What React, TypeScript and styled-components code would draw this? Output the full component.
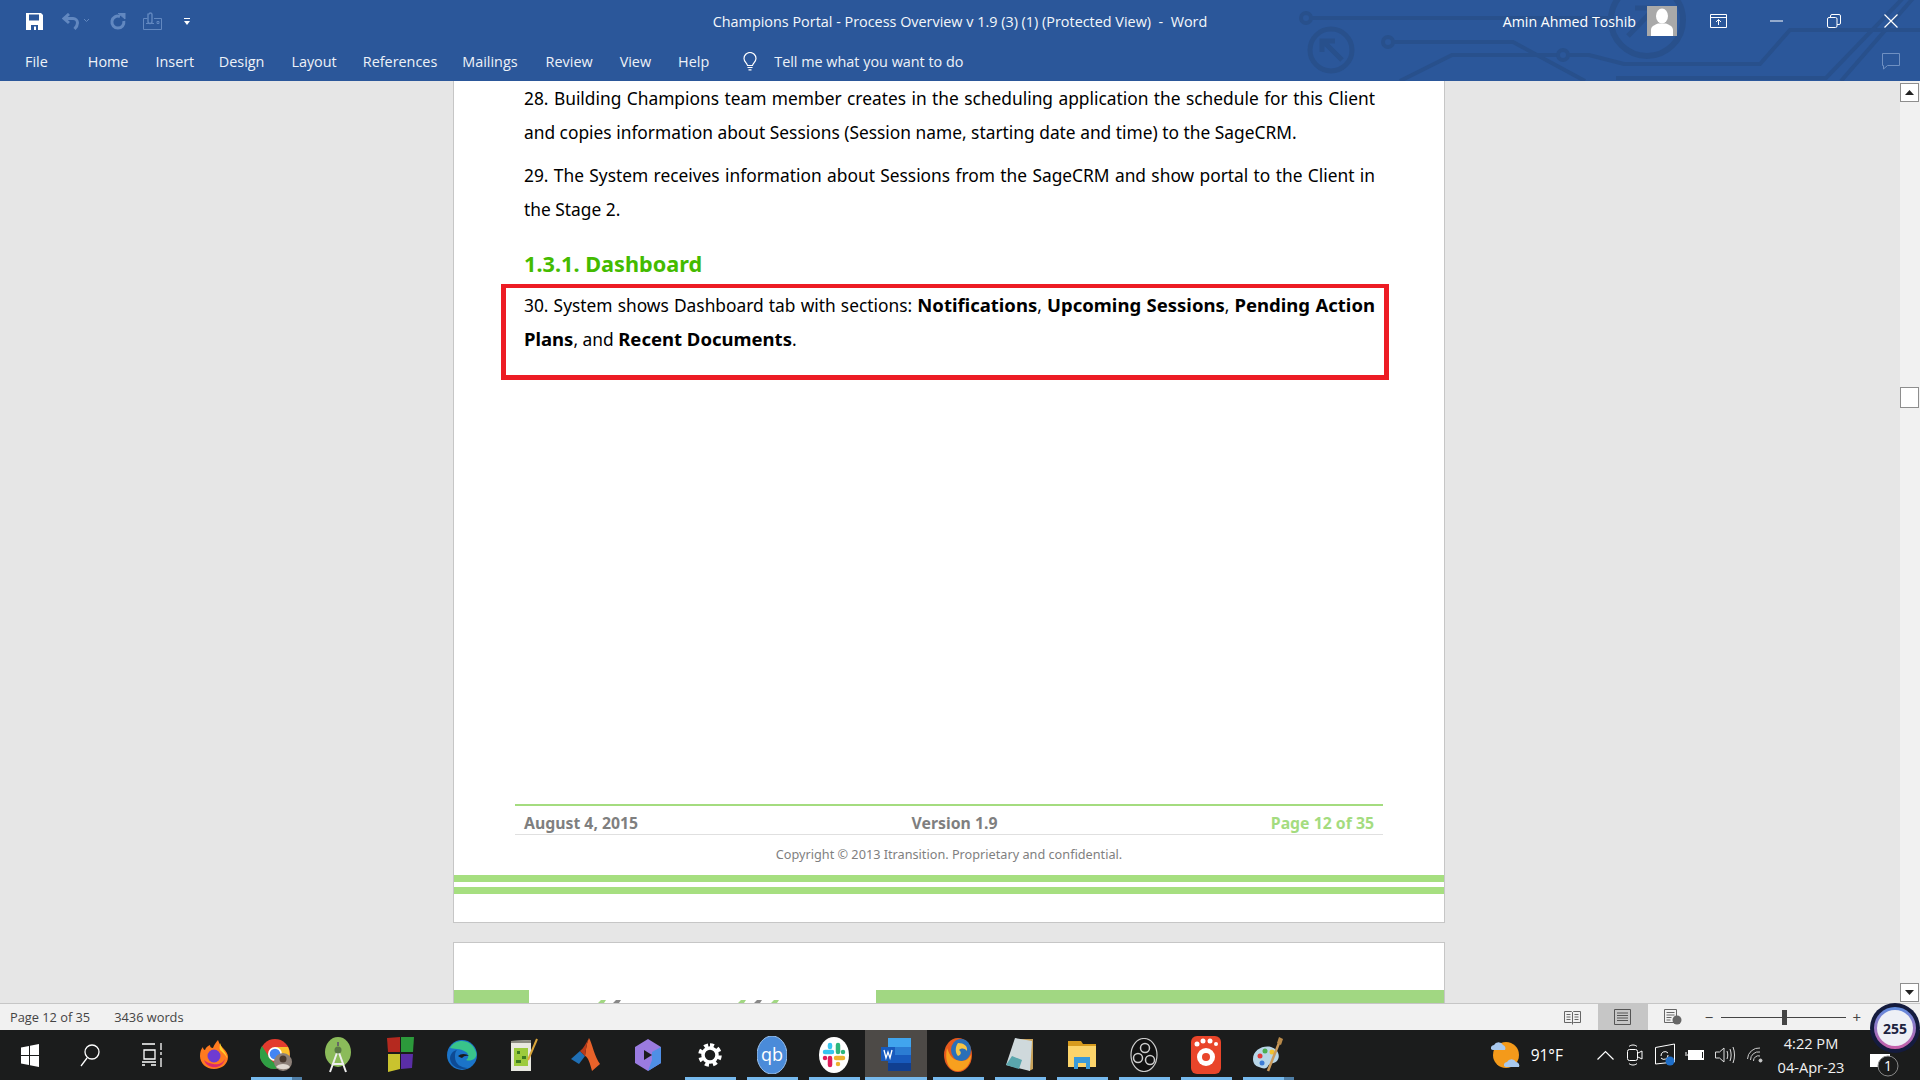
import React from "react";
import styled, { createGlobalStyle } from "styled-components";

const Global = createGlobalStyle`
  html, body { margin: 0; padding: 0; background: #e6e6e6; overflow: hidden; }
  * { box-sizing: border-box; }
`;

const ui = `"Open Sans", "Noto Sans", "Liberation Sans", sans-serif`;
const doc = `"Noto Sans", "Open Sans", "Liberation Sans", sans-serif`;

const Screen = styled.div`
  position: relative; width: 1920px; height: 1080px; display: flex; flex-direction: column; overflow: hidden;
`;

/* ---------- title bar ---------- */
const TitleBar = styled.header`
  position: relative; height: 81px; flex: none; background: #2b579a; color: #fff; font-family: ${ui};
`;
const CircuitArt = styled.svg`
  position: absolute; top: 0; right: 0; pointer-events: none;
`;
const TopRow = styled.div`
  position: relative; height: 42px; display: grid; grid-template-columns: 1fr auto 1fr; align-items: center;
`;
const Qat = styled.div`
  display: flex; align-items: center; padding-left: 26px;
`;
const QatItem = styled.span<{ $w: number }>`
  display: flex; width: ${(p) => p.$w}px; align-items: center;
`;
const DocTitle = styled.div`
  font-size: 14.4px; white-space: pre; color: #f4f7fb;
`;
const Account = styled.div`
  display: flex; align-items: center; justify-content: flex-end;
`;
const UserName = styled.span`
  font-size: 14.2px; margin-right: 11px; white-space: nowrap;
`;
const Avatar = styled.div`
  width: 30px; height: 30px; background: #a9a9a9; margin-right: 13px; display: flex;
`;
const WinBtn = styled.div`
  width: 57.5px; height: 42px; display: flex; align-items: center; justify-content: center;
`;
const TabRow = styled.nav`
  position: relative; height: 39px; display: flex; align-items: center; padding-left: 25px; padding-right: 20px;
`;
const Tab = styled.span<{ $gap: number }>`
  font-size: 14.4px; color: #eef2f8; margin-right: ${(p) => p.$gap}px; white-space: nowrap;
`;
const TellMe = styled.span`
  font-size: 14.4px; color: #eef2f8; margin-left: 17px;
`;
const CommentSlot = styled.div`
  margin-left: auto; display: flex;
`;

/* ---------- document area ---------- */
const Work = styled.main`
  flex: 1; display: flex; min-height: 0; background: #e6e6e6;
`;
const Canvas = styled.div`
  flex: 1; display: flex; flex-direction: column; align-items: center; overflow: hidden; gap: 19px; padding-right: 2px;
`;
const Sheet = styled.section`
  flex: none; width: 992px; height: 842px; background: #fff; border: 1px solid #c6c6c6; border-top: 0;
  display: flex; flex-direction: column; font-family: ${doc}; color: #000;
`;
const Body = styled.div`
  padding: 0 69px 0 70px;
`;
const Para = styled.p`
  margin: 0 0 9px; font-size: 17.35px; line-height: 34px; text-align: justify; text-align-last: left;
`;
const Heading = styled.h3`
  margin: 23px 0 0; font-size: 21.7px; line-height: 30px; font-weight: 700; color: #44bb00;
`;
const Callout = styled.div`
  margin: 5px -14px 0 -23px; height: 96px; border: 5px solid #ed1c24; border-top-width: 4px;
  padding: 0 9px 0 18px;
`;
const CalloutText = styled.p`
  margin: 0; font-size: 17.35px; line-height: 34px; text-align: justify; text-align-last: left;
`;
const Strong = styled.b`
  font-weight: 700; font-size: 18.5px; line-height: 0;
`;
const PageFoot = styled.footer`
  margin-top: auto; display: flex; flex-direction: column;
`;
const FootRow = styled.div`
  margin: 0 61px; height: 31px; border-top: 2px solid #a4dc7f; border-bottom: 1px solid #e0e0e0;
  display: flex; justify-content: space-between; align-items: center; padding: 5px 9px 0;
  font-size: 15.8px; font-weight: 700; color: #7f7f7f;
`;
const PageNo = styled.span`
  color: #a4dc7f;
`;
const Copyright = styled.div`
  text-align: center; height: 40px; line-height: 39px; font-size: 12.7px; color: #7f7f7f;
`;
const GreenBand = styled.div`
  height: 7px; background: #a6df80;
  & + & { margin-top: 5px; }
`;
const FootPad = styled.div`
  height: 28px;
`;
const SheetNext = styled.section`
  flex: none; width: 992px; height: 200px; background: #fff; border: 1px solid #c6c6c6; padding-top: 47px;
`;
const HeaderBand = styled.div`
  display: flex; height: 20px; background: #a1d782;
`;
const LogoGap = styled.div`
  width: 347px; margin-left: 75px; background: #fff; display: flex;
`;

const ScrollBar = styled.aside`
  width: 20px; flex: none; background: #f1f1f1; display: flex; flex-direction: column; padding: 2px 1px 1px 0;
`;
const ScrollBtn = styled.div`
  width: 19px; height: 19px; background: #fff; border: 1px solid #8e8e8e; display: flex; align-items: center; justify-content: center;
`;
const Thumb = styled.div`
  width: 19px; height: 21px; background: #fff; border: 1px solid #8e8e8e; margin-top: 285px;
`;
const ScrollSpace = styled.div`
  flex: 1;
`;

/* ---------- status bar ---------- */
const StatusBar = styled.div`
  height: 27px; flex: none; background: #f1f1f1; border-top: 1px solid #c6c6c6; display: flex; align-items: center;
  font-family: ${ui}; font-size: 12.8px; color: #444; padding-left: 10px;
`;
const StatusText = styled.span`
  margin-right: 24px;
`;
const ViewGroup = styled.div`
  margin-left: auto; display: flex; align-items: center; height: 100%;
`;
const ViewBtn = styled.div<{ $on?: boolean }>`
  width: 50px; height: 100%; display: flex; align-items: center; justify-content: center;
  background: ${(p) => (p.$on ? "#c6c6c6" : "transparent")};
`;
const ZoomBox = styled.div`
  display: flex; align-items: center; margin-left: 7px; margin-right: 59px; color: #444; font-size: 15px;
`;
const ZoomTrack = styled.div`
  position: relative; width: 125px; height: 1px; background: #444; margin: 0 6px 0 8px;
`;
const ZoomThumb = styled.div`
  position: absolute; left: 61px; top: -7px; width: 5px; height: 15px; background: #444;
`;

/* ---------- task bar ---------- */
const TaskBar = styled.footer`
  height: 50px; flex: none; background: #1b1c1c; display: flex; align-items: center; color: #fff; font-family: ${ui};
`;
const Slot = styled.div<{ $w?: number; $on?: boolean; $run?: boolean; $multi?: boolean }>`
  position: relative; width: ${(p) => p.$w ?? 62}px; height: 50px; flex: none; display: flex; align-items: center; justify-content: center;
  background: ${(p) => (p.$on ? "#4d4a47" : "transparent")};
  &::after {
    content: ""; display: ${(p) => (p.$run ? "block" : "none")}; position: absolute; bottom: 0; height: 3px;
    left: ${(p) => (p.$on ? 0 : 6)}px; right: ${(p) => (p.$on ? 0 : 5)}px;
    background: ${(p) => (p.$multi ? "linear-gradient(90deg,#76b9ed 0 80%,#4f7ea6 80%)" : "#76b9ed")};
  }
`;
const Tray = styled.div`
  margin-left: auto; display: flex; align-items: center; height: 100%;
`;
const WeatherSlot = styled.span`
  display: flex; margin-right: 2px;
`;
const Temp = styled.span`
  font-size: 15.5px; margin: 0 27px 0 7px;
`;
const TrayIcon = styled.span`
  width: 30px; display: flex; justify-content: center;
`;
const Clock = styled.div`
  width: 78px; margin-left: 2px; text-align: center; font-size: 14.6px; line-height: 24px; color: #f2f2f2;
`;
const NoticeSlot = styled.div`
  width: 70px; height: 100%; position: relative; display: flex; align-items: flex-end; padding-left: 20px; padding-bottom: 2px;
`;
const Speed = styled.div`
  position: absolute; right: 0; bottom: 27px; width: 50px; height: 50px; border-radius: 50%; background: #141b3e;
  display: flex; align-items: center; justify-content: center;
`;
const SpeedRing = styled.div`
  width: 42px; height: 42px; border-radius: 50%; padding: 3px; background: linear-gradient(180deg,#5f8de0,#c95fa8);
  display: flex;
`;
const SpeedFace = styled.div`
  flex: 1; border-radius: 50%; background: #eef0f6; display: flex; align-items: center; justify-content: center;
  font: 700 14px ${ui}; color: #1c2340;
`;

/* ---------- drawings ---------- */
const dim = "#6288c0";
const Circuit = () => (
  <CircuitArt width="640" height="81" viewBox="1280 0 640 81" fill="none" stroke="#28508c" strokeWidth="4">
    <circle cx="1306" cy="18" r="5" />
    <path d="M1311 18H1608" />
    <circle cx="1331" cy="50" r="21" strokeWidth="5" />
    <path d="M1342 60L1323 41M1322 52V41H1335" strokeWidth="5" />
    <circle cx="1388" cy="42" r="5" />
    <path d="M1393 42H1513L1585 81" />
    <path d="M1400 81L1452 55H1558" />
    <circle cx="1563" cy="55" r="5" />
    <path d="M1568 55H1589L1624 64H1760L1790 30H1920" />
    <circle cx="1647" cy="20" r="36" strokeWidth="6" />
    <path d="M1616 78H1826L1905 -4M1841 81L1915 -4" />
    <path d="M1635 8H1655V28M1655 8L1628 36" strokeWidth="5" />
  </CircuitArt>
);
const Save = () => (
  <svg width="17" height="17" viewBox="0 0 17 17"><path fill="#fff" d="M0 0h15l2 2v15H0z" /><path fill="#2b579a" d="M3 1.500h10v6H3zM5 12h7v5H5z" /><path fill="#fff" d="M8 13.500h2V17H8z" /></svg>
);
const Undo = () => (
  <svg width="28" height="17" viewBox="0 0 28 17" fill="none" stroke={dim}>
    <path strokeWidth="3" d="M7 1L2 5.500 7 10M2 5.500h9a4.500 4.500 0 0 1 4.500 4.500c0 2-1 4-3 6" />
    <path strokeWidth="1" d="M22 6l2.500 2.500L27 6" />
  </svg>
);
const Redo = () => (
  <svg width="17" height="17" viewBox="0 0 17 17" fill="none" stroke={dim} strokeWidth="3"><path d="M11 3.500A6 6 0 1 0 14.800 8" /><path fill={dim} strokeWidth="1" d="M9 0h7v6z" /></svg>
);
const Attach = () => (
  <svg width="19" height="18" viewBox="0 0 19 18" fill="none" stroke={dim}><path d="M.5 6.500h4M11 6.500h7.500v11H.5v-11M3 11.500h8M14 9.500h2v2h-2z" /><path strokeWidth="1.400" d="M5 1.500v8a2 2 0 0 0 4 0v-7a1.500 1.500 0 0 0-3 0" /></svg>
);
const QatMore = () => (
  <svg width="6" height="7" viewBox="0 0 6 7"><path fill="#fff" d="M0 0h6v1H0zM0 3h6L3 7z" /></svg>
);
const AvatarArt = () => (
  <svg width="30" height="30" viewBox="0 0 30 30"><ellipse cx="15" cy="10" rx="6" ry="7.500" fill="#fff" /><path fill="#fff" d="M4 30v-6c0-4 4-5 7-6.500h8c3 1.500 7 2.500 7 6.500v6z" /></svg>
);
const RibbonOpt = () => (
  <svg width="17" height="14" viewBox="0 0 17 14" fill="none" stroke="#fff"><path d="M.5.500h16v13H.5zM.5 3.500h16" /><path d="M8.500 11V5.500M6 8l2.500-2.500L11 8" /></svg>
);
const Minimize = () => <svg width="13" height="2" viewBox="0 0 13 2"><path stroke="#fff" d="M0 1h13" /></svg>;
const Restore = () => (
  <svg width="14" height="14" viewBox="0 0 14 14" fill="none" stroke="#fff"><rect x=".5" y="3.500" width="9.500" height="10" rx="1.500" /><path d="M3.500 3V2A1.500 1.500 0 0 1 5 .5h7A1.500 1.500 0 0 1 13.500 2v7A1.500 1.500 0 0 1 12 10.500h-2" /></svg>
);
const CloseX = () => <svg width="14" height="14" viewBox="0 0 14 14"><path stroke="#fff" strokeWidth="1.200" d="M.5.500l13 13M13.500.500l-13 13" /></svg>;
const Comment = () => (
  <svg width="18" height="17" viewBox="0 0 18 17" fill="none" stroke="#6f90c2"><path d="M.5.500h17v12H5.500l-4 3.500v-3.500h-1z" /></svg>
);
const Bulb = () => (
  <svg width="14" height="19" viewBox="0 0 14 19" fill="none" stroke="#fff" strokeWidth="1.200"><path d="M4.500 13.500C4 11 1 9.500 1 6.500a6 6 0 0 1 12 0c0 3-3 4.500-3.500 7zM4.500 15.500h5M5.500 17.800h3" /></svg>
);
const Arrow = ({ up }: { up?: boolean }) => (
  <svg width="9" height="5" viewBox="0 0 9 5"><path fill="#222" d={up ? "M0 5h9L4.500 0z" : "M0 0h9L4.500 5z"} /></svg>
);
const LogoTips = () => (
  <svg width="346" height="20" viewBox="0 0 346 20">
    <path fill="#a1d782" d="M69 13l3-3h5l-2 3zM209 13l3-3h5l-2 3zM242 13l3-3h5l-2 3z" />
    <path fill="#888" d="M84 13l3-3h5l-2 3zM225 13l3-3h5l-2 3z" />
  </svg>
);
const ReadView = () => (
  <svg width="17" height="15" viewBox="0 0 17 15" fill="none" stroke="#666"><path d="M.5 1.500h7l1 1 1-1h7v11h-7l-1 1-1-1h-7zM8.500 2.500v12M2.500 4.500h4M2.500 7h4M2.500 9.500h4M10.500 4.500h4M10.500 7h4M10.500 9.500h4" /></svg>
);
const PrintView = () => (
  <svg width="17" height="16" viewBox="0 0 17 16" fill="none" stroke="#555"><path d="M.5.500h16v15H.5zM3 4h11M3 6.500h11M3 9h11M3 11.500h11" /></svg>
);
const WebView = () => (
  <svg width="18" height="16" viewBox="0 0 18 16" fill="none"><path stroke="#666" d="M.5.500h12v13H.5zM2.500 3.500h8M2.500 6h8M2.500 8.500h5M2.500 11h4" /><circle cx="13" cy="11" r="4.500" fill="#666" /></svg>
);

const WinLogo = () => <svg width="18" height="23" viewBox="0 0 18 23"><path fill="#fff" d="M0 3.500L8 2v9H0zM9 1.800L18 0v11H9zM0 12h8v9l-8-1.500zM9 12h9v11l-9-1.800z" /></svg>;
const Search = () => <svg width="20" height="24" viewBox="0 0 20 24" fill="none" stroke="#fff" strokeWidth="1.300"><circle cx="12" cy="9" r="7" /><path d="M7 15L1 23" /></svg>;
const TaskView = () => <svg width="20" height="24" viewBox="0 0 20 24" fill="none" stroke="#fff" strokeWidth="1.300"><path d="M0 1h13M2 7h11v9H2zM0 22h3M0 19h14M9 22h5M19 0v7M19 9v3M19 15v9" /></svg>;
const Firefox = () => (
  <svg width="28" height="30" viewBox="0 0 28 30"><path fill="#ff7a1f" d="M14 29C6 29 0 23 0 16c0-4 1-7 3-9 0 2 1 3 2 3 1-3 3-4 5-5 0 2 1 3 3 3 1-3 3-6 5-8 1 3 2 5 5 8 3 3 5 6 5 9 0 7-6 12-14 12z" /><path fill="#ffd02a" d="M20 3c1 3 2 5 4 8 2 3 3 5 3 7-2-4-5-6-7-8-1-2 0-5 0-7z" /><path fill="#d92b6e" d="M4 20c2 6 8 8 13 7 4-1 7-4 8-8-3 5-8 6-12 5-4-1-7-2-9-4z" /><circle cx="14" cy="16" r="6.500" fill="#6e3bd1" /></svg>
);
const Chrome = () => (
  <svg width="32" height="32" viewBox="0 0 32 32">
    <circle cx="15" cy="15" r="15" fill="#e33b2e" /><path fill="#2f9e44" d="M15 30A15 15 0 0 1 2 7l9 14 9 8z" /><path fill="#fbc02d" d="M15 8h13a15 15 0 0 1-3 18z" />
    <circle cx="15" cy="15" r="7" fill="#fff" /><circle cx="15" cy="15" r="5.300" fill="#4285f4" />
    <circle cx="23" cy="23" r="9" fill="#8d8078" /><circle cx="23" cy="20" r="3.500" fill="#4a3a30" /><path fill="#e0d8d0" d="M16 28c2-4 12-4 14 0-3 3-10 3-14 0z" />
  </svg>
);
const Android = () => (
  <svg width="26" height="36" viewBox="0 0 26 36" fill="none"><ellipse cx="13" cy="15" rx="13" ry="15" fill="#8bbb5a" /><path stroke="#eee" strokeWidth="2" d="M13 13L5 35M13 13l8 22M7 27h12" /><circle cx="13" cy="13" r="3.500" fill="#5a7a45" /><path stroke="#666" strokeWidth="2" d="M13 5v4" /></svg>
);
const WinColor = () => (
  <svg width="28" height="38" viewBox="0 0 28 38"><path fill="#b5291f" d="M1 2l13-1v15H2z" /><path fill="#2c9a3b" d="M15 1h13l-1 15H15z" /><path fill="#c9c32e" d="M2 18h12v15L2 36z" /><path fill="#5a2ea6" d="M15 18h12l-1 14-11 1z" /></svg>
);
const Edge = () => (
  <svg width="30" height="30" viewBox="0 0 30 30"><circle cx="15" cy="15" r="15" fill="#1b74c9" /><path fill="#39c48a" d="M3 8C8-2 25-2 29 12c2 7-5 10-10 8 3-2 3-6 0-8-6-4-13-3-16-4z" /><path fill="#0d4a94" d="M8 17c0 7 6 11 13 11-7 3-17-1-18-9 0-4 2-8 7-9-2 2-2 4-2 7z" /><path fill="#1b1c1c" d="M11 16a7 5 0 0 1 11 0 6 4 0 0 0-7 2c-2-1-3-1-4-2z" /></svg>
);
const Notepad = () => (
  <svg width="28" height="34" viewBox="0 0 28 34"><path fill="#e8e8e0" d="M1 3l20-1v31H1z" /><path fill="#8a8a80" d="M1 3l20-1v3H1z" /><path fill="#9ccb3c" d="M4 10h14v18H4z" /><path fill="#3c7a20" d="M7 13h3v3H7zM12 18h4v3h-4zM6 22h5v3H6z" /><path stroke="#d9a53a" strokeWidth="2" d="M27 1L18 22" /></svg>
);
const Matlab = () => (
  <svg width="30" height="34" viewBox="0 0 30 34"><path fill="#1f6fb5" d="M0 21l9-8 5 5-6 8z" /><path fill="#e8622a" d="M18 0c3 5 6 20 11 26l-8 7c-2-8-4-14-7-15 1-7 2-14 4-18z" /><path fill="#b9391a" d="M18 0c-3 5-5 10-9 13l5 5c1-7 2-14 4-18z" /></svg>
);
const Copilot = () => (
  <svg width="28" height="32" viewBox="0 0 28 32"><path fill="#9a7be0" d="M14 0l13 8v16l-13 8-13-8V8z" /><path fill="#4f8fe6" d="M14 32l13-8V8l-9 5v8z" /><path fill="#1b1c1c" d="M10 11l8 5-8 5z" /></svg>
);
const Gear = () => (
  <svg width="24" height="24" viewBox="0 0 24 24" fill="none" stroke="#fff"><circle cx="12" cy="12" r="7" strokeWidth="3.500" /><path strokeWidth="4" strokeDasharray="4 3.850" d="M12 2.200a9.800 9.800 0 1 1-.01 0" /></svg>
);
const QBit = () => (
  <svg width="30" height="38" viewBox="0 0 30 38"><ellipse cx="15" cy="19" rx="15" ry="19" fill="#4a8bd9" stroke="#9cc3ee" /><text x="15" y="25" textAnchor="middle" fontSize="18" fontFamily="Open Sans, sans-serif" fill="#fff">qb</text></svg>
);
const Slack = () => (
  <svg width="30" height="36" viewBox="0 0 30 36" fill="none" strokeWidth="4.500" strokeLinecap="round"><ellipse cx="15" cy="18" rx="15" ry="18" fill="#fff" /><path stroke="#36c5f0" d="M6 15h7M11 8v2" /><path stroke="#2eb67d" d="M19 8v7M24 15h0" /><path stroke="#ecb22e" d="M24 21h-7M19 27h0" /><path stroke="#e01e5a" d="M11 28v-7M6 21h0" /></svg>
);
const Word = () => (
  <svg width="30" height="34" viewBox="0 0 30 34"><path fill="#41a5ee" d="M7 0h23v9H7z" /><path fill="#2b7cd3" d="M7 9h23v8H7z" /><path fill="#185abd" d="M7 17h23v8H7z" /><path fill="#103f91" d="M7 25h23v8H7z" /><path fill="#185abd" d="M0 9h14v14H0z" /><path stroke="#fff" strokeWidth="1.300" fill="none" d="M3 12l2 8 2-6 2 6 2-8" /></svg>
);
const FirefoxOld = () => (
  <svg width="28" height="34" viewBox="0 0 28 34"><ellipse cx="14" cy="17" rx="14" ry="17" fill="#e65a1e" /><ellipse cx="17" cy="12" rx="10" ry="11" fill="#2a6fb8" /><path fill="#f8a01e" d="M3 10c3 8 6 13 15 13 4 0 7-3 9-6 0 9-6 16-13 16C6 33 0 25 3 10z" /><path fill="#f6c445" d="M14 5c6 0 10 3 9 8-3-3-5-3-8-1 3 2 2 5-1 6-3-3-3-9 0-13z" /></svg>
);
const Notes = () => (
  <svg width="28" height="34" viewBox="0 0 28 34"><path fill="#c8a25a" d="M11 1h16v30l-4 2z" /><path fill="#cfd9dc" d="M9 0l17 3-2 30L0 27z" /><path fill="#5aa6ad" d="M6 18l10 4-3 9-13-4z" /></svg>
);
const Folder = () => (
  <svg width="28" height="28" viewBox="0 0 28 28"><path fill="#d79b1e" d="M0 0h13l2 3h13v5H0z" /><path fill="#fcd46a" d="M0 5h28v21H0z" /><path fill="#3a9ad9" d="M6 16h16v12h-4v-6h-8v6H6z" /></svg>
);
const Obs = () => (
  <svg width="28" height="34" viewBox="0 0 28 34" fill="none"><ellipse cx="14" cy="17" rx="13" ry="16.500" fill="#111" stroke="#ccc" strokeWidth="1.200" /><circle cx="15" cy="10" r="4.500" stroke="#ccc" strokeWidth="1.500" /><circle cx="8" cy="20" r="4.500" stroke="#ccc" strokeWidth="1.500" /><circle cx="20" cy="22" r="4.500" stroke="#ccc" strokeWidth="1.500" /></svg>
);
const Redshot = () => (
  <svg width="30" height="38" viewBox="0 0 30 38"><rect width="30" height="38" rx="6" fill="#e9452a" /><circle cx="15" cy="21" r="9" fill="#fff" /><circle cx="15" cy="21" r="4" fill="#e9452a" /><circle cx="6" cy="8" r="2.500" fill="#fff" /><circle cx="12" cy="5" r="2.500" fill="#fff" /><circle cx="19" cy="5" r="2.500" fill="#fff" /><circle cx="25" cy="8" r="2" fill="#fff" /></svg>
);
const Paint = () => (
  <svg width="30" height="36" viewBox="0 0 30 36"><path fill="#b8d6e8" d="M0 22C0 13 10 8 18 10c7 2 10 9 6 14-3 3-8 2-9 5-1 3-5 3-9 1-4-1-6-4-6-8z" /><circle cx="7" cy="19" r="2.500" fill="#e23b3b" /><circle cx="12" cy="14" r="2.500" fill="#4caf50" /><circle cx="19" cy="15" r="2.500" fill="#f2c230" /><circle cx="9" cy="26" r="2.500" fill="#3a7bd5" /><path stroke="#c9995a" strokeWidth="2.500" d="M15 34L26 6" /><path fill="#b98a4a" d="M24 6l2-6 4 2-2 6z" /></svg>
);
const Weather = () => (
  <svg width="32" height="32" viewBox="0 0 32 32"><circle cx="16" cy="16" r="13" fill="#f49a1a" /><path fill="#a9c9ee" d="M1 10a3.500 3.500 0 0 1 3-4 5 5 0 0 1 9 0 3.500 3.500 0 0 1 2 5H3a3 3 0 0 1-2-1zM14 27a3.500 3.500 0 0 1 3-4 5 5 0 0 1 9 0 3.500 3.500 0 0 1 3 5H17a3 3 0 0 1-3-1z" /></svg>
);
const Caret = () => <svg width="17" height="10" viewBox="0 0 17 10" fill="none" stroke="#fff" strokeWidth="1.200"><path d="M.5 9.500l8-8 8 8" /></svg>;
const Meet = () => <svg width="16" height="22" viewBox="0 0 16 22" fill="none" stroke="#fff"><rect x=".5" y="5.500" width="10" height="11" rx="2" /><path d="M11 9l4-2v8l-4-2M2 2.500c2-2 6-2 8 0M2 19.500c2 2 6 2 8 0" /></svg>;
const Screen2 = () => <svg width="20" height="24" viewBox="0 0 20 24"><path fill="none" stroke="#fff" d="M.5 4.500L19.500 1v18L.5 21z" /><path fill="none" stroke="#fff" d="M6 13a4 4 0 0 1 7-3M13 12a4 4 0 0 1-7 3" /><circle cx="15" cy="18" r="4.500" fill="#1f6fc9" /></svg>;
const Battery = () => <svg width="20" height="12" viewBox="0 0 20 12"><path fill="#fff" d="M3 1h16v10H3z" /><path fill="#1b1c1c" d="M17 3h1v6h-1z" /><path stroke="#fff" d="M0 6h3M1 3v2" /></svg>;
const Volume = () => <svg width="20" height="20" viewBox="0 0 20 20" fill="none" stroke="#ddd"><path d="M.5 7h4L9 3v14l-4.500-4h-4zM12 6c1 3 1 5 0 8M15 4c1.500 4 1.500 8 0 12M18 2c2 5 2 11 0 16" /></svg>;
const Wifi = () => <svg width="16" height="16" viewBox="0 0 16 16" fill="none" stroke="#ccc"><path d="M.5 12A11.500 11.500 0 0 1 13 1M3.500 13A8 8 0 0 1 13 5M6.500 14A5 5 0 0 1 13 9" /><circle cx="13.500" cy="13.500" r="1.500" fill="#ccc" /></svg>;
const Notify = () => (
  <svg width="32" height="26" viewBox="0 0 32 26"><path fill="#fff" d="M0 2h20v13H0z" /><circle cx="18" cy="14" r="10" fill="#1b1c1c" stroke="#888" /><text x="18" y="19" textAnchor="middle" fontSize="14" fontFamily="Open Sans, sans-serif" fill="#fff">1</text></svg>
);

const tabs: [string, number][] = [
  ["File", 40], ["Home", 27], ["Insert", 24.5], ["Design", 27], ["Layout", 26], ["References", 25],
  ["Mailings", 28], ["Review", 27], ["View", 27], ["Help", 34],
];

const apps: { el: React.ReactNode; run?: boolean; on?: boolean; multi?: boolean }[] = [
  { el: <Firefox /> }, { el: <Chrome />, run: true, multi: true }, { el: <Android /> }, { el: <WinColor /> }, { el: <Edge /> },
  { el: <Notepad /> }, { el: <Matlab /> }, { el: <Copilot /> }, { el: <Gear />, run: true }, { el: <QBit />, run: true },
  { el: <Slack />, run: true }, { el: <Word />, run: true, on: true }, { el: <FirefoxOld />, run: true }, { el: <Notes />, run: true },
  { el: <Folder />, run: true }, { el: <Obs />, run: true }, { el: <Redshot />, run: true }, { el: <Paint />, run: true, multi: true },
];

export default function App() {
  return (
    <Screen>
      <Global />
      <TitleBar>
        <Circuit />
        <TopRow>
          <Qat>
            <QatItem $w={36}><Save /></QatItem>
            <QatItem $w={47}><Undo /></QatItem>
            <QatItem $w={34}><Redo /></QatItem>
            <QatItem $w={41}><Attach /></QatItem>
            <QatItem $w={6}><QatMore /></QatItem>
          </Qat>
          <DocTitle>{"Champions Portal - Process Overview v 1.9 (3) (1) (Protected View)  -  Word"}</DocTitle>
          <Account>
            <UserName>Amin Ahmed Toshib</UserName>
            <Avatar><AvatarArt /></Avatar>
            <WinBtn><RibbonOpt /></WinBtn>
            <WinBtn><Minimize /></WinBtn>
            <WinBtn><Restore /></WinBtn>
            <WinBtn><CloseX /></WinBtn>
          </Account>
        </TopRow>
        <TabRow>
          {tabs.map(([t, g]) => <Tab key={t} $gap={g}>{t}</Tab>)}
          <Bulb />
          <TellMe>Tell me what you want to do</TellMe>
          <CommentSlot><Comment /></CommentSlot>
        </TabRow>
      </TitleBar>
      <Work>
        <Canvas>
          <Sheet>
            <Body>
              <Para>28. Building Champions team member creates in the scheduling application the schedule for this Client and copies information about Sessions (Session name, starting date and time) to the SageCRM.</Para>
              <Para>29. The System receives information about Sessions from the SageCRM and show portal to the Client in the Stage 2.</Para>
              <Heading>1.3.1. Dashboard</Heading>
              <Callout>
                <CalloutText>30. System shows Dashboard tab with sections: <Strong>Notifications</Strong>, <Strong>Upcoming Sessions</Strong>, <Strong>Pending Action Plans</Strong>, and <Strong>Recent Documents</Strong>.</CalloutText>
              </Callout>
            </Body>
            <PageFoot>
              <FootRow><span>August 4, 2015</span><span>Version 1.9</span><PageNo>Page 12 of 35</PageNo></FootRow>
              <Copyright>Copyright © 2013 Itransition. Proprietary and confidential.</Copyright>
              <GreenBand />
              <GreenBand />
              <FootPad />
            </PageFoot>
          </Sheet>
          <SheetNext>
            <HeaderBand><LogoGap><LogoTips /></LogoGap></HeaderBand>
          </SheetNext>
        </Canvas>
        <ScrollBar>
          <ScrollBtn><Arrow up /></ScrollBtn>
          <Thumb />
          <ScrollSpace />
          <ScrollBtn><Arrow /></ScrollBtn>
        </ScrollBar>
      </Work>
      <StatusBar>
        <StatusText>Page 12 of 35</StatusText>
        <StatusText>3436 words</StatusText>
        <ViewGroup>
          <ViewBtn><ReadView /></ViewBtn>
          <ViewBtn $on><PrintView /></ViewBtn>
          <ViewBtn><WebView /></ViewBtn>
          <ZoomBox>−<ZoomTrack><ZoomThumb /></ZoomTrack>+</ZoomBox>
        </ViewGroup>
      </StatusBar>
      <TaskBar>
        <Slot $w={60}><WinLogo /></Slot>
        <Slot $w={60}><Search /></Slot>
        <Slot $w={63}><TaskView /></Slot>
        {apps.map((a, i) => <Slot key={i} $run={a.run} $on={a.on} $multi={a.multi}>{a.el}</Slot>)}
        <Tray>
          <WeatherSlot><Weather /></WeatherSlot>
          <Temp>91°F</Temp>
          <TrayIcon><Caret /></TrayIcon>
          <TrayIcon><Meet /></TrayIcon>
          <TrayIcon><Screen2 /></TrayIcon>
          <TrayIcon><Battery /></TrayIcon>
          <TrayIcon><Volume /></TrayIcon>
          <TrayIcon><Wifi /></TrayIcon>
          <Clock>4:22 PM<br />04-Apr-23</Clock>
          <NoticeSlot><Notify /></NoticeSlot>
        </Tray>
      </TaskBar>
      <Speed><SpeedRing><SpeedFace>255</SpeedFace></SpeedRing></Speed>
    </Screen>
  );
}
